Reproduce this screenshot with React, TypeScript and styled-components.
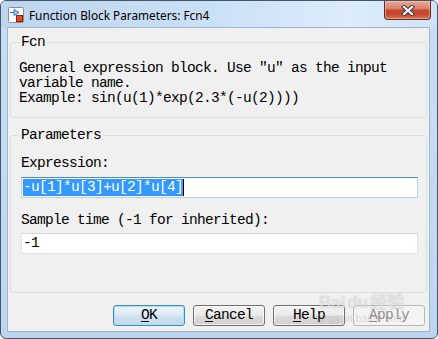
import React, { FC } from "react";
import styled, { createGlobalStyle } from "styled-components";

const GlobalStyle = createGlobalStyle`
  html, body {
    margin: 0;
    padding: 0;
    background: #ffffff;
  }
  * {
    box-sizing: border-box;
  }
`;

const mono = `"Liberation Mono", "Courier New", monospace`;

const Window = styled.div`
  position: relative;
  width: 438px;
  height: 339px;
  display: flex;
  flex-direction: column;
  border: 1px solid #44566a;
  border-radius: 6px;
  overflow: hidden;
  background: linear-gradient(to bottom, #c9def4, #bdd6ef);
`;

const TitleBar = styled.div`
  height: 27px;
  flex: none;
  display: flex;
  align-items: flex-start;
  background: linear-gradient(to right, #bdd5ee 0%, #c9dff5 45%, #dcecfb 80%, #cfe3f6 100%);
`;

const TitleIcon = styled.svg`
  width: 16px;
  height: 16px;
  margin: 6px 0 0 7px;
  flex: none;
`;

const TitleText = styled.div`
  margin: 6px 0 0 5px;
  font-family: "Noto Sans", "Liberation Sans", sans-serif;
  font-size: 11.8px;
  line-height: 16px;
  color: #000;
  white-space: nowrap;
`;

const CloseButton = styled.div`
  margin-left: auto;
  margin-right: 6px;
  width: 47px;
  height: 19px;
  flex: none;
  display: flex;
  align-items: center;
  justify-content: center;
  border: 1px solid #6b2a20;
  border-top: none;
  border-radius: 0 0 4px 4px;
  background: linear-gradient(
    to bottom,
    #e8a898 0%,
    #dc8470 40%,
    #c7452d 52%,
    #c24a31 75%,
    #d8775e 100%
  );
  box-shadow: inset 0 0 0 1px rgba(255, 210, 200, 0.45);
`;

const Client = styled.div`
  flex: 1;
  margin: 0 8px 7px 7px;
  padding: 0 2px 5px 2px;
  background: #f0f0f0;
  box-shadow: 0 0 0 1px #9fb5cc;
  display: flex;
  flex-direction: column;
`;

const Group = styled.fieldset<{ $pad: string; $top: number }>`
  margin: ${(p) => p.$top}px 0 0 0;
  min-width: 0;
  padding: ${(p) => p.$pad};
  border: 1px solid #d5dfe5;
  border-radius: 3px;
`;

const monoText = `
  font-family: ${mono};
  font-size: 14.5px;
  letter-spacing: -0.7px;
  color: #000;
`;

const Legend = styled.legend<{ $shift?: number }>`
  ${monoText}
  padding: 0 2px;
  margin-left: ${(p) => p.$shift ?? 0}px;
  line-height: 16px;
`;

const Line = styled.div`
  ${monoText}
  line-height: 15px;
  white-space: pre;
`;

const FieldLabel = styled(Line)<{ $gap: number }>`
  margin-top: ${(p) => p.$gap}px;
`;

const TextBox = styled.div<{ $focused?: boolean }>`
  ${monoText}
  height: 21px;
  margin-top: ${(p) => (p.$focused ? 6 : 5)}px;
  padding: 0 1px;
  background: #fff;
  border: 1px solid ${(p) => (p.$focused ? "#b5d3ec" : "#e3e3e3")};
  border-top-color: ${(p) => (p.$focused ? "#4a8ac4" : "#d6d6d6")};
  line-height: 19px;
  white-space: pre;
`;

const Selected = styled.span`
  display: inline-block;
  height: 17px;
  margin-top: 1px;
  line-height: 17px;
  vertical-align: top;
  background: #3399ff;
  color: #fff;
  border-right: 1px solid #000;
`;

const ButtonRow = styled.div`
  margin-top: 12px;
  padding-right: 2px;
  display: flex;
  justify-content: flex-end;
  gap: 8px;
`;

const Button = styled.div<{ $variant?: "default" | "disabled" }>`
  ${monoText}
  width: 72px;
  height: 21px;
  display: flex;
  align-items: center;
  justify-content: center;
  border-radius: 3px;
  line-height: 19px;
  border: 1px solid
    ${(p) =>
      p.$variant === "default"
        ? "#3c8dbc"
        : p.$variant === "disabled"
        ? "#b5b8ba"
        : "#707070"};
  color: ${(p) => (p.$variant === "disabled" ? "#8d8d8d" : "#000")};
  background: ${(p) =>
    p.$variant === "default"
      ? "linear-gradient(to bottom, #eaf3f9 0%, #dfecf5 48%, #cfe2ef 52%, #c3d9e8 100%)"
      : p.$variant === "disabled"
      ? "#f4f4f4"
      : "linear-gradient(to bottom, #f2f2f2 0%, #ebebeb 48%, #dddddd 52%, #cfcfcf 100%)"};
  box-shadow: ${(p) =>
    p.$variant === "default"
      ? "inset 0 0 0 1px #a6e1f8"
      : p.$variant === "disabled"
      ? "none"
      : "inset 0 0 0 1px rgba(255,255,255,0.7)"};

  u {
    text-decoration: underline;
    text-underline-offset: 2px;
  }
`;

/* faint site watermark laid over the button row */
const Watermark = styled.div`
  position: absolute;
  left: 318px;
  top: 292px;
  width: 100px;
  pointer-events: none;
  color: rgba(255, 255, 255, 0.55);
  text-shadow: 0 0 1px rgba(120, 120, 120, 0.45);
  font-family: "Liberation Sans", "Noto Sans CJK SC", sans-serif;
`;

const WatermarkLogo = styled.div`
  display: flex;
  align-items: baseline;
  gap: 2px;
  font-size: 17px;
  font-weight: bold;
  line-height: 20px;
`;

const WatermarkSite = styled.div`
  font-size: 10px;
  line-height: 11px;
  letter-spacing: 0.3px;
  color: rgba(150, 150, 150, 0.35);
  text-shadow: none;
`;

const SimulinkIcon: FC = () => (
  <TitleIcon viewBox="0 0 16 16">
    <rect x="0.5" y="0.5" width="15" height="15" rx="1" fill="#fbfbfb" stroke="#8c8c8c" />
    <line x1="2" y1="5.5" x2="6" y2="5.5" stroke="#2d6fcf" strokeWidth="1.2" />
    <path d="M6 2.5 L11 5.5 L6 8.5 Z" fill="#9fd0f5" stroke="#2d6fcf" strokeWidth="1" />
    <rect x="8.5" y="8.5" width="6" height="6" fill="#e04a25" stroke="#8e2410" />
  </TitleIcon>
);

const CloseGlyph: FC = () => (
  <svg width="14" height="11" viewBox="0 0 14 11">
    <path d="M3 2 L11 9 M11 2 L3 9" stroke="#3b3b3b" strokeWidth="4.2" strokeLinecap="square" />
    <path d="M3 2 L11 9 M11 2 L3 9" stroke="#ffffff" strokeWidth="2.2" strokeLinecap="square" />
  </svg>
);

const App: FC = () => {
  return (
    <>
      <GlobalStyle />
      <Window>
        <TitleBar>
          <SimulinkIcon />
          <TitleText>Function Block Parameters: Fcn4</TitleText>
          <CloseButton>
            <CloseGlyph />
          </CloseButton>
        </TitleBar>
        <Client>
          <Group $pad="11px 8px 11px 8px" $top={6}>
            <Legend>Fcn</Legend>
            <Line>General expression block. Use "u" as the input</Line>
            <Line>variable name.</Line>
            <Line>Example: sin(u(1)*exp(2.3*(-u(2))))</Line>
          </Group>
          <Group $pad="13px 8px 38px 10px" $top={9}>
            <Legend $shift={-2}>Parameters</Legend>
            <FieldLabel $gap={0}>Expression:</FieldLabel>
            <TextBox $focused>
              <Selected>-u[1]*u[3]+u[2]*u[4]</Selected>
            </TextBox>
            <FieldLabel $gap={15}>Sample time (-1 for inherited):</FieldLabel>
            <TextBox>-1</TextBox>
          </Group>
          <ButtonRow>
            <Button $variant="default">
              <span>
                <u>O</u>K
              </span>
            </Button>
            <Button>
              <span>
                <u>C</u>ancel
              </span>
            </Button>
            <Button>
              <span>
                <u>H</u>elp
              </span>
            </Button>
            <Button $variant="disabled">
              <span>
                <u>A</u>pply
              </span>
            </Button>
          </ButtonRow>
        </Client>
        <Watermark>
          <WatermarkLogo>
            <span>Bai</span>
            <span>du</span>
            <span>经验</span>
          </WatermarkLogo>
          <WatermarkSite>jingyan.baidu.com</WatermarkSite>
        </Watermark>
      </Window>
    </>
  );
};

export default App;
